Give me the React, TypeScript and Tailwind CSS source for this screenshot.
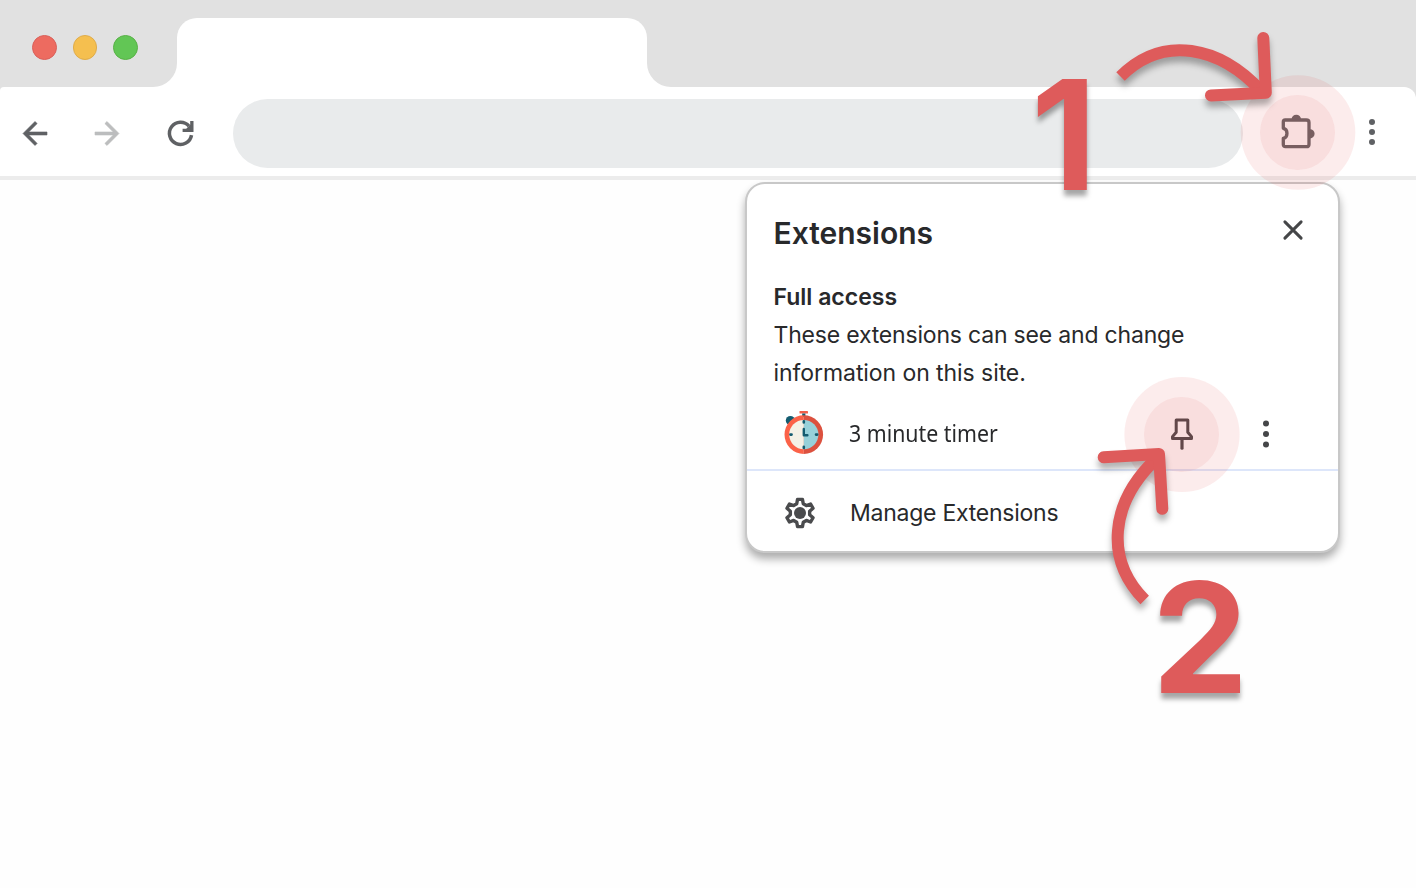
import React from "react";

const BACK_PATH = "M20 11H7.83l5.59-5.59L12 4l-8 8 8 8 1.41-1.41L7.83 13H20v-2z";

function Dots({ gap, className }: { gap: number; className: string }) {
  return (
    <svg width="12" height="36" viewBox="0 0 12 36" className={className} fill="currentColor">
      <circle cx="6" cy={18 - gap} r="3" />
      <circle cx="6" cy="18" r="3" />
      <circle cx="6" cy={18 + gap} r="3" />
    </svg>
  );
}

function TabStrip() {
  return (
    <div className="flex h-[87px] bg-white">
      <div className="flex w-[177px] items-center gap-[16px] rounded-br-[24px] bg-[#e1e1e1] pt-[8px] pl-8">
        <span className="size-[24.6px] rounded-full border border-[#d9605a] bg-[#ed6b60]" />
        <span className="size-[24.6px] rounded-full border border-[#dfac4b] bg-[#f5bf4f]" />
        <span className="size-[24.6px] rounded-full border border-[#58b146] bg-[#62c655]" />
      </div>
      <div className="w-[470px] bg-[#e1e1e1] pt-[18px]">
        <div className="h-full rounded-t-[20px] bg-white" />
      </div>
      <div className="flex-1 rounded-bl-[24px] bg-[#e1e1e1]" />
    </div>
  );
}

function Toolbar() {
  return (
    <div className="h-[93px] bg-[#e1e1e1]">
      <div className="flex h-full items-center rounded-tl-[4px] rounded-tr-[12px] border-b-4 border-[#ececec] bg-white pt-[4px] pl-[17px]">
        <svg
          width="36"
          height="36"
          viewBox="0 -0.33 24 24"
          className="mb-px text-[#5f6164]"
          fill="currentColor"
          stroke="currentColor"
          strokeWidth="0.4"
        >
          <path d={BACK_PATH} />
        </svg>
        <svg
          width="36"
          height="36"
          viewBox="0 -0.33 24 24"
          className="mb-px ml-9 -scale-x-100 text-[#bcbdbe]"
          fill="currentColor"
          stroke="currentColor"
          strokeWidth="0.4"
        >
          <path d={BACK_PATH} />
        </svg>
        <svg width="36" height="36" viewBox="0 -0.5 36 36" className="mb-px ml-[38px] text-[#5f6164]">
          <path d="M28.5 19.6A11.1 11.1 0 1 1 26 10.6" fill="none" stroke="currentColor" strokeWidth="3.5" />
          <path d="M30.5 5.5V16.4H19.6V13.2H23.2L27.2 9.2V5.5Z" fill="currentColor" />
        </svg>
        <div className="ml-[34px] h-[69px] w-[1010px] rounded-full bg-[#e9ebec]" />
        <svg width="40" height="40" viewBox="0 0 40 40" className="mb-[5px] ml-[35px] text-[#5f6164]">
          <path
            d="M7.2 9H28.2Q31 9 31 11.5V33.2Q31 35.7 28.5 35.7H7.5Q5.3 35.7 5.3 33.5V27.4C10.2 26.2 10.2 18.2 5.3 17.3V11Q5.3 9 7.2 9Z"
            fill="none"
            stroke="currentColor"
            strokeWidth="3.3"
            strokeLinejoin="round"
          />
          <path d="M13.6 8.4A4.7 4.7 0 0 1 23 8.4ZM32 18.2A4.6 4.6 0 0 1 32 27.4Z" fill="currentColor" />
        </svg>
        <Dots gap={10} className="mb-[4px] ml-12 text-[#5f6164]" />
      </div>
    </div>
  );
}

function TimerIcon() {
  return (
    <svg width="42" height="46" viewBox="0 0 42 46" className="mb-[7px]">
      <circle cx="7.4" cy="12.6" r="4.6" fill="#145c70" />
      <rect x="16.5" y="3" width="8.5" height="2.6" rx="0.6" fill="#f0604a" />
      <rect x="19.2" y="5.5" width="3.2" height="3.5" fill="#145c70" />
      <path d="M20.8 7.3a19.3 19.3 0 0 0 0 38.6z" fill="#fb6248" />
      <path d="M20.8 7.3a19.3 19.3 0 0 1 0 38.6z" fill="#dc513f" />
      <path d="M20.8 12a14.6 14.6 0 0 0 0 29.2z" fill="#f4f1e6" />
      <path d="M20.8 12a14.6 14.6 0 0 1 0 29.2z" fill="#97d1da" />
      <path
        d="M20.8 13.2v1.2M20.8 38.8v1.2M7.4 26.6h1.2M33 26.6h1.2"
        stroke="#145c70"
        strokeWidth="2.6"
        strokeLinecap="round"
      />
      <path d="M20.8 21v6.2h3.6" stroke="#145c70" strokeWidth="2.4" fill="none" strokeLinecap="round" strokeLinejoin="round" />
    </svg>
  );
}

function GearIcon() {
  return (
    <svg width="36" height="36" viewBox="0 0 36 36" className="text-[#4a4b4d]">
      <path
        d="M15.7 4.4h4.6l.8 4.2 2.9 1.7 4-1.5 2.3 4-3.2 2.8v3.4l3.2 2.8-2.3 4-4-1.5-2.9 1.7-.8 4.2h-4.6l-.8-4.2-2.9-1.7-4 1.5-2.3-4 3.2-2.8v-3.4l-3.2-2.8 2.3-4 4 1.5 2.9-1.7z"
        fill="none"
        stroke="currentColor"
        strokeWidth="3.2"
        strokeLinejoin="round"
        transform="translate(18 18) scale(1.06) translate(-18 -17.3)"
      />
      <circle cx="18" cy="18" r="6" fill="currentColor" />
    </svg>
  );
}

function ExtensionsPopup() {
  return (
    <div className="absolute top-[182px] left-[745px] h-[371px] w-[595px] rounded-[20px] border-2 border-[#c8c8c8] bg-white font-[Inter,sans-serif] text-[#28292b] shadow-[0_6px_8px_rgba(0,0,0,0.32)]">
      <div className="flex h-[94px] items-center justify-between pt-[3px] pr-[33px] pl-[26.5px]">
        <h1 className="text-[30px] leading-[36px] font-semibold">Extensions</h1>
        <svg width="24" height="24" viewBox="0 0 24 24" className="mb-[5px] text-[#454648]">
          <path d="M3.9 3.9l16.2 16.2M20.1 3.9L3.9 20.1" stroke="currentColor" strokeWidth="3" strokeLinecap="round" />
        </svg>
      </div>
      <div className="h-[116px] pl-[26.5px] text-[23px] leading-[38px] whitespace-nowrap">
        <h2 className="font-semibold">Full access</h2>
        <p className="tracking-[-0.19px]">These extensions can see and change</p>
        <p className="tracking-[-0.07px]">information on this site.</p>
      </div>
      <div className="flex h-[77px] items-center border-b-2 border-[#dde6fa] pt-[6px] pl-[36px]">
        <TimerIcon />
        <span className="mb-[2px] ml-[24px] w-[315px] shrink-0 font-['Noto_Sans',sans-serif] text-[23px] whitespace-nowrap">
          <span className="inline-block origin-left scale-x-[0.927]">3 minute timer</span>
        </span>
        <svg width="36" height="36" viewBox="0 0 36 36" className="mb-px text-[#454648]">
          <path
            d="M12.2 4h11.6v12.2l3.7 4.4v2H8.5v-2l3.7-4.4z"
            fill="none"
            stroke="currentColor"
            strokeWidth="3"
            strokeLinejoin="round"
          />
          <path d="M18 22.5v9.7" stroke="currentColor" strokeWidth="3.2" strokeLinecap="round" />
        </svg>
        <Dots gap={10.5} className="mb-px ml-[60px] text-[#454648]" />
      </div>
      <div className="flex h-[80px] items-center pt-[4px] pl-[35px]">
        <GearIcon />
        <span className="ml-[32px] text-[23px] tracking-[-0.25px]">Manage Extensions</span>
      </div>
    </div>
  );
}

function Annotations() {
  return (
    <div className="pointer-events-none absolute inset-0 overflow-hidden">
      <svg width="1416" height="888" viewBox="0 0 1416 888" className="absolute inset-0">
        <circle cx="1298" cy="132.5" r="57.3" fill="#e14848" fillOpacity="0.1" />
        <circle cx="1297.5" cy="132.5" r="37.5" fill="#e06464" fillOpacity="0.1" />
        <circle cx="1182" cy="434.5" r="57.6" fill="#e14848" fillOpacity="0.1" />
        <circle cx="1181.5" cy="434.5" r="37.5" fill="#e06464" fillOpacity="0.1" />
        <g
          fill="none"
          stroke="#de5b5b"
          strokeWidth="12"
          strokeLinejoin="round"
          className="drop-shadow-[0_6px_3px_rgba(0,0,0,0.3)]"
        >
          <path d="M1120.5 76.5C1163 34 1220 46 1262 92" />
          <path d="M1263.3 38L1265.8 92.8L1211 95.4" strokeLinecap="round" />
          <path d="M1157 458C1109 503 1105 560 1144.7 600" />
          <path d="M1103.7 457.3L1159 454L1162.3 508.8" strokeLinecap="round" />
        </g>
      </svg>
      <span className="absolute top-[60px] left-[1031px] font-[Inter,sans-serif] text-[152.5px] leading-[150px] font-bold text-[#de5b5b] [text-shadow:0_6px_5px_rgba(0,0,0,0.35)]">
        1
      </span>
      <span className="absolute top-[563px] left-[1152px] font-[Inter,sans-serif] text-[153px] leading-[150px] font-bold text-[#de5b5b] [text-shadow:0_6px_5px_rgba(0,0,0,0.35)]">
        2
      </span>
    </div>
  );
}

export default function App() {
  return (
    <div className="relative h-[888px] w-[1416px] overflow-hidden bg-[#fefefe]">
      <TabStrip />
      <Toolbar />
      <ExtensionsPopup />
      <Annotations />
    </div>
  );
}
